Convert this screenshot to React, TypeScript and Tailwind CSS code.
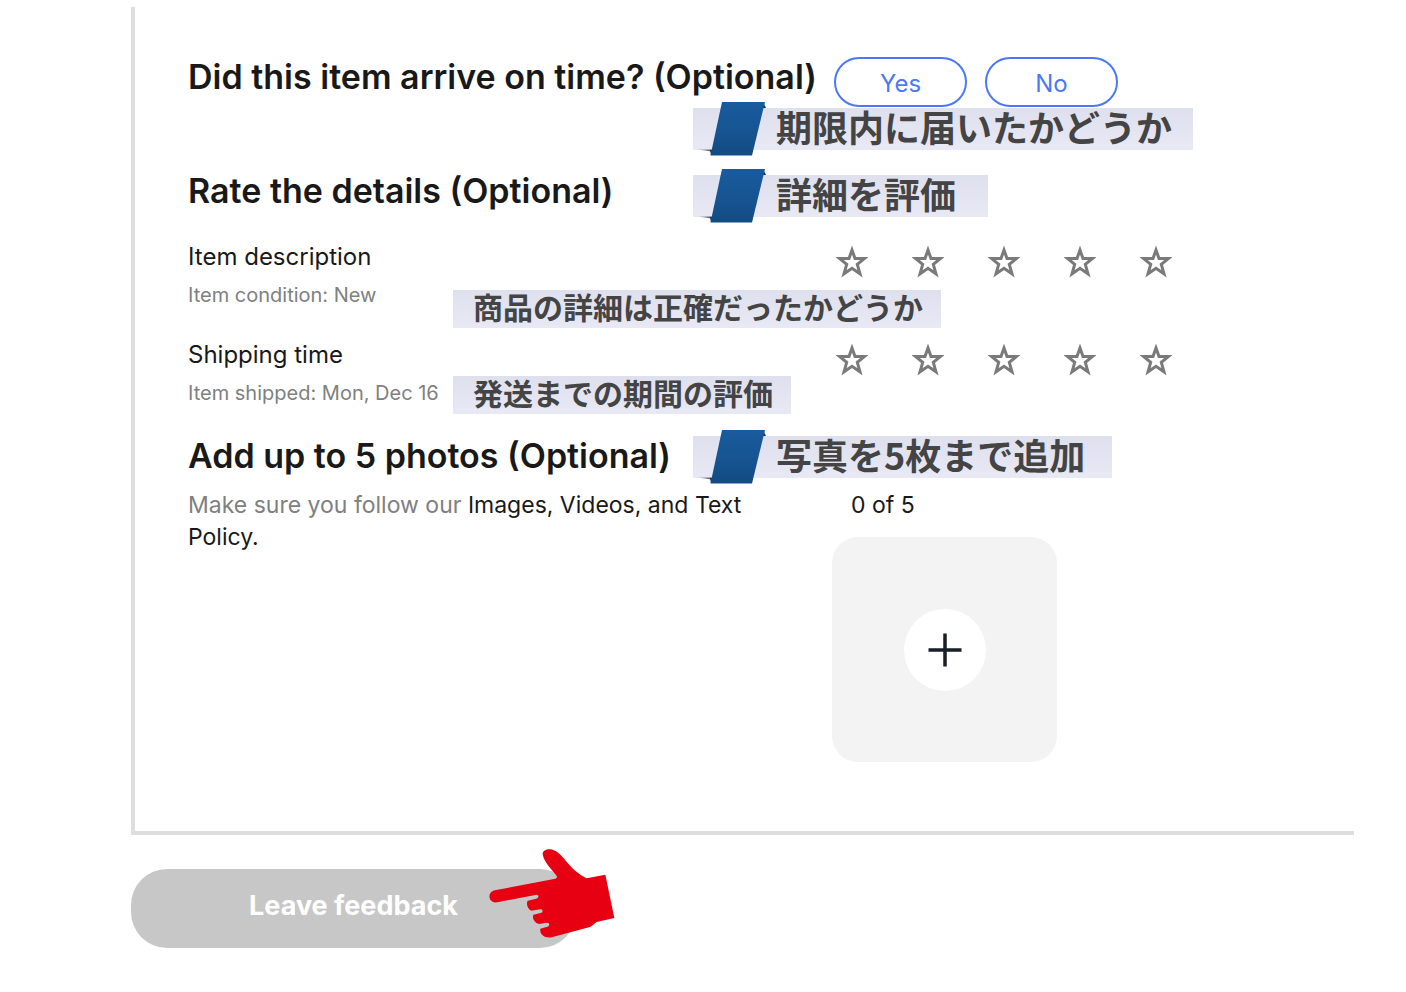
import { useState } from "react";
import clsx from "clsx";

interface Rating {
  id: string;
  title: string;
  detail: string;
  note: string;
  noteClass: string;
}

const ratings: Rating[] = [
  {
    id: "description",
    title: "Item description",
    detail: "Item condition: New",
    note: "商品の詳細は正確だったかどうか",
    noteClass: "mt-[7px]",
  },
  {
    id: "shipping",
    title: "Shipping time",
    detail: "Item shipped: Mon, Dec 16",
    note: "発送までの期間の評価",
    noteClass: "-mt-[5px]",
  },
];

const barClass =
  "shrink-0 whitespace-nowrap bg-linear-to-b from-[#dfe0ed] to-[#e8e9f5] font-['Noto_Sans_CJK_JP',sans-serif] font-bold text-[#444]";

// Ribbon heading with the folded blue tab on its left
function Ribbon({ text, className }: { text: string; className?: string }) {
  return (
    <p
      className={clsx(
        "relative h-[42px] pl-[83px] text-[36px] leading-9",
        barClass,
        className,
      )}
    >
      <svg
        className="absolute -top-[6px] left-0"
        width="76"
        height="54"
        viewBox="0 0 76 54"
        aria-hidden="true"
      >
        <defs>
          <linearGradient id="tab" x1="0" y1="0" x2="0" y2="1">
            <stop offset="0" stopColor="#195b9d" />
            <stop offset="0.5" stopColor="#175593" />
            <stop offset="1" stopColor="#134b82" />
          </linearGradient>
          <linearGradient id="fold" x1="0" y1="0" x2="1" y2="0">
            <stop offset="0" stopColor="#d5d6e0" />
            <stop offset="1" stopColor="#4a5058" />
          </linearGradient>
        </defs>
        <path d="M4 47.500H19L18.500 49.500Z" fill="url(#fold)" />
        <path d="M17 48H20L18 53.500Z" fill="#12335c" />
        <path d="M70 0L73 6H68Z" fill="#12335c" />
        <path d="M29 0H72L59 53.500H17.500Z" fill="url(#tab)" />
      </svg>
      {text}
    </p>
  );
}

function StarRating({ id }: { id: string }) {
  const [value, setValue] = useState(0);

  return (
    <div
      role="radiogroup"
      aria-labelledby={`${id}-title`}
      className="flex h-[42px] items-center gap-11"
    >
      {[1, 2, 3, 4, 5].map((n) => (
        <label key={n} className="relative block size-8 cursor-pointer">
          <input
            type="radio"
            name={id}
            value={n}
            aria-label={`${n}`}
            checked={value === n}
            onChange={() => setValue(n)}
            className="absolute inset-0 size-8 appearance-none"
          />
          <svg viewBox="0 0 32 32" className="size-8" aria-hidden="true">
            <path
              d="M16 4L19 12.500H28.500L21.300 18.300L24 27.800L16 22.300L8 27.800L10.700 18.300L3.500 12.500H13Z"
              fill={n <= value ? "#767676" : "none"}
              stroke="#7a7a7a"
              strokeWidth="3"
            />
          </svg>
        </label>
      ))}
    </div>
  );
}

function Hand() {
  return (
    <svg
      className="pointer-events-none absolute -top-5 left-[358px]"
      width="126"
      height="89"
      viewBox="57 41 378 267"
      aria-hidden="true"
    >
      <path
        fill="#e60012"
        d="M75 165L256 130Q263 128 260 122C246 103 222 82 218 57C217 43 240 36 258 48C289 68 295 101 350 129L406 118L433 248L380 260C372 264 370 271 360 275L245 306C223 310 208 297 211 280L232 274C240 271 239 262 232 262L207 266C193 262 186 248 190 238L212 233C220 231 219 222 212 222L183 226C172 220 168 205 173 196L199 190C207 188 207 178 200 178L82 201C54 205 50 170 75 165Z"
      />
    </svg>
  );
}

export default function App() {
  const [onTime, setOnTime] = useState<string | null>(null);

  return (
    <main className="min-h-screen bg-white pt-[7px] pr-[52px] pb-11 pl-[131px] font-['Inter',sans-serif] text-[#191919]">
      <section className="border-b-4 border-l-4 border-[#dedede] pt-[50px] pb-[69px] pl-[53px]">
        <div className="flex items-start">
          <h2 className="w-[646px] shrink-0 text-[34px] leading-10 font-semibold whitespace-nowrap">
            Did this item arrive on time? (Optional)
          </h2>
          <div className="flex gap-[18px]">
            {["Yes", "No"].map((answer) => (
              <button
                key={answer}
                type="button"
                aria-pressed={onTime === answer}
                onClick={() => setOnTime(answer)}
                className="h-[50px] w-[133px] rounded-full border-2 border-[#4b78f5] pt-1 text-[24px] text-[#4b78f5]"
              >
                {answer}
              </button>
            ))}
          </div>
        </div>
        <div className="mt-px ml-[505px] flex">
          <Ribbon text="期限内に届いたかどうか" className="w-[500px]" />
        </div>

        <div className="mt-[25px] flex items-start">
          <h2 className="w-[505px] shrink-0 text-[34px] leading-8 font-semibold">
            Rate the details (Optional)
          </h2>
          <Ribbon text="詳細を評価" className="w-[295px]" />
        </div>

        <div className="mt-6 flex flex-col gap-[11px]">
          {ratings.map((rating) => (
            <div key={rating.id}>
              <div className="flex items-start">
                <h3
                  id={`${rating.id}-title`}
                  className="w-[648px] shrink-0 text-[24px] leading-8"
                >
                  {rating.title}
                </h3>
                <StarRating id={rating.id} />
              </div>
              <div className="flex items-start">
                <p className="w-[265px] shrink-0 text-[20px] leading-6 whitespace-nowrap text-[#808080]">
                  {rating.detail}
                </p>
                <p
                  className={clsx(
                    "h-[38px] pr-[18px] pl-5 text-[30px] leading-8",
                    barClass,
                    rating.noteClass,
                  )}
                >
                  {rating.note}
                </p>
              </div>
            </div>
          ))}
        </div>

        <div className="mt-[22px] flex items-start">
          <h2 className="w-[505px] shrink-0 text-[34px] leading-10 font-semibold">
            Add up to 5 photos (Optional)
          </h2>
          <Ribbon text="写真を5枚まで追加" className="w-[419px]" />
        </div>

        <div className="mt-[11px] flex items-start text-[23px] leading-8">
          <p className="w-[644px] shrink-0 pr-16 text-[#808080]">
            Make sure you follow our{" "}
            <a href="#policy" className="text-[#191919]">
              Images, Videos, and Text Policy.
            </a>
          </p>
          <div>
            <p className="pl-[19px]">0 of 5</p>
            <button
              type="button"
              aria-label="Add photo"
              className="mt-4 flex size-[225px] items-center justify-center rounded-[26px] bg-[#f3f3f3]"
            >
              <span className="flex size-[82px] items-center justify-center rounded-full bg-white">
                <svg width="34" height="34" viewBox="0 0 34 34" aria-hidden="true">
                  <path d="M17 0.500V33.500M0.500 17H33.500" stroke="#191f28" strokeWidth="3.500" />
                </svg>
              </span>
            </button>
          </div>
        </div>
      </section>

      <div className="relative mt-[34px]">
        <button
          type="button"
          className="h-[79px] w-[445px] rounded-[36px] bg-[#c7c7c7] pb-1 text-[27px] font-bold text-white"
        >
          Leave feedback
        </button>
        <Hand />
      </div>
    </main>
  );
}
